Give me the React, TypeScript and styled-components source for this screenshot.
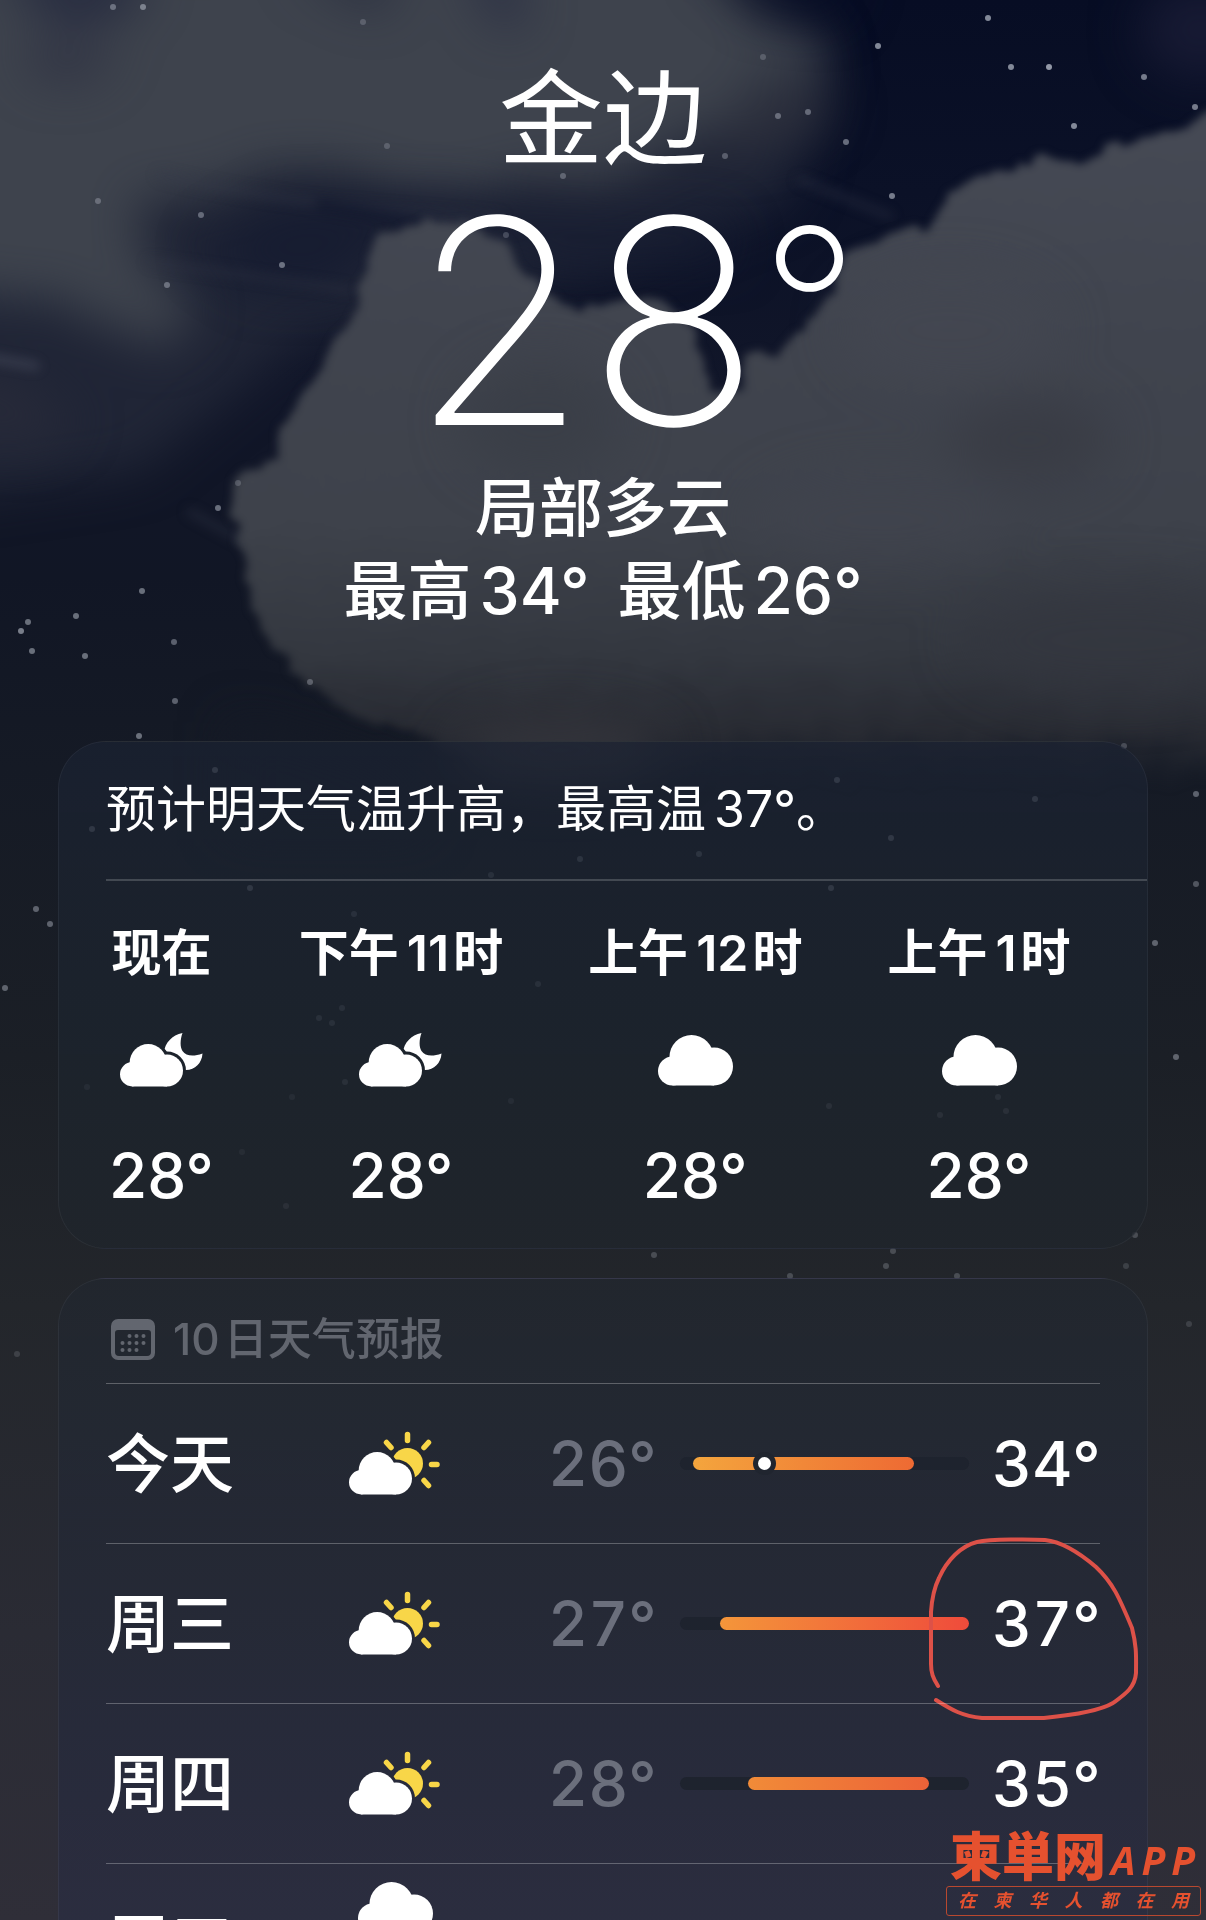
import React, { useId } from "react";
import styled, { createGlobalStyle } from "styled-components";

const GlobalStyle = createGlobalStyle`
  *, *::before, *::after { box-sizing: border-box; }
  body {
    margin: 0;
    background: #2d2d38;
    color: #fff;
    font-family: Inter, "Noto Sans CJK SC", sans-serif;
  }
  h1, h2, p, ul, ol { margin: 0; padding: 0; font-weight: inherit; }
  ul, ol { list-style: none; }
`;

const Page = styled.main`
  position: relative;
  height: 100vh;
  overflow: hidden;
  padding: 59px 58px 0;
`;

const SkyArt = styled.svg`
  position: absolute;
  inset: 0;
  z-index: -1;
  width: 100%;
  height: 100%;
`;

const Header = styled.header`
  display: flex;
  flex-direction: column;
  align-items: center;
  padding-bottom: 109px;
`;

const City = styled.h1`
  font-size: 104px;
  line-height: 121px;
  font-weight: 400;
`;

const CurrentTemp = styled.p`
  display: flex;
  align-items: flex-start;
  padding: 0 0 4px 64px;
  font-size: 286px;
  line-height: 282px;
  font-weight: 200;
`;

const Degree = styled.span`
  font-size: 218px;
  line-height: 252px;
  font-weight: 250;
`;

const Conditions = styled.p`
  display: flex;
  gap: 28px;
  font-size: 64px;
  line-height: 83px;
  font-weight: 500;
`;

const Num = styled.span`
  margin-left: 8px;
`;

const Cards = styled.div`
  display: flex;
  flex-direction: column;
  gap: 29px;
`;

const Card = styled.section<{ $tone: "hourly" | "daily" }>`
  border: 1px solid rgba(255, 255, 255, 0.05);
  border-radius: 48px;
  padding-left: 47px;
  background: ${(p) =>
    p.$tone === "hourly"
      ? "linear-gradient(rgba(27,34,50,.72), rgba(28,36,46,.76) 55%, rgba(32,37,44,.8))"
      : "linear-gradient(rgba(34,39,47,.8), rgba(36,41,54,.85) 40%, rgba(44,46,68,.85))"};
`;

const Summary = styled.p`
  padding: 37px 0 40px;
  border-bottom: 2px solid rgba(255, 255, 255, 0.18);
  font-size: 50px;
  line-height: 60px;
`;

const Hours = styled.ol`
  display: flex;
  gap: 85px;
  padding: 42px 47px 36px 3px;
`;

const Hour = styled.li`
  display: flex;
  flex-direction: column;
  align-items: center;
`;

const HourLabel = styled.span`
  font-size: 50px;
  line-height: 60px;
  font-weight: 600;
  white-space: nowrap;
`;

const HourDigits = styled.span`
  margin: 0 4px 0 8px;
`;

const HourIcon = styled.span`
  display: flex;
  align-items: center;
  height: 54px;
  margin: 50px 0 53px;
`;

const HourTemp = styled.span`
  font-size: 62px;
  line-height: 72px;
  font-weight: 500;
`;

const DailyBody = styled.div`
  padding: 29px 47px 0 0;
`;

const DailyTitle = styled.h2`
  display: flex;
  align-items: center;
  gap: 18px;
  padding: 0 5px 13px;
  color: #62666f;
  font-size: 44px;
  line-height: 62px;
  font-weight: 500;
`;

const TitleCount = styled.span`
  margin-right: 4px;
`;

const DayRow = styled.li`
  position: relative;
  display: flex;
  align-items: center;
  height: 160px;
  border-top: 1px solid rgba(255, 255, 255, 0.27);
  font-size: 62px;
  line-height: 80px;
  font-weight: 500;
`;

const DayName = styled.span`
  width: 243px;
  font-size: 64px;
`;

const DayIcon = styled.span`
  display: flex;
  justify-content: center;
  width: 92px;
  margin-right: 107px;
`;

const Low = styled.span`
  width: 105px;
  color: #6b6f7c;
  font-variant-numeric: tabular-nums;
`;

const High = styled.span`
  width: 108px;
  font-variant-numeric: tabular-nums;
`;

const Track = styled.div`
  flex: 1;
  position: relative;
  height: 13px;
  margin: 0 23px 0 27px;
  border-radius: 7px;
  background: #1e232e;
`;

const Fill = styled.div`
  position: absolute;
  top: 0;
  bottom: 0;
  border-radius: 7px;
`;

const NowDot = styled.div`
  position: absolute;
  top: 0;
  width: 13px;
  height: 13px;
  margin-left: -6px;
  border-radius: 50%;
  background: #fff;
  box-shadow: 0 0 0 5px #20252f;
`;

const Scribble = styled.svg`
  position: absolute;
  right: -40px;
  top: -8px;
  width: 212px;
  height: 188px;
  overflow: visible;
`;

const Watermark = styled.aside`
  position: absolute;
  right: 5px;
  bottom: 4px;
  width: 255px;
  color: #e5512f;
`;

const Brand = styled.div`
  display: flex;
  align-items: center;
  justify-content: space-between;
  padding: 0 6px 0 4px;
`;

const BrandName = styled.span`
  font-size: 52px;
  line-height: 56px;
  font-weight: 900;
`;

const BrandApp = styled.span`
  display: flex;
  gap: 6px;
  padding-top: 4px;
  font-family: "Open Sans", sans-serif;
  font-size: 39px;
  line-height: 52px;
  font-weight: 700;
  font-style: italic;
`;

const Slogan = styled.div`
  display: flex;
  justify-content: space-between;
  border: 1px solid #b8482f;
  border-radius: 3px;
  padding: 0 11px;
  font-size: 18px;
  line-height: 28px;
  font-weight: 600;
  font-style: italic;
`;

/* ---------- icons ---------- */

const CloudShape = () => (
  <>
    <circle cx="14.500" cy="36" r="14.500" />
    <circle cx="33.500" cy="22" r="22" />
    <circle cx="56" cy="31.500" r="19" />
    <path d="M14.500 25H56V50.500H14.500Z" />
  </>
);

const CloudIcon = () => (
  <svg width="75" height="51" viewBox="0 0 75 51" fill="#fff" aria-label="多云">
    <CloudShape />
  </svg>
);

const CloudRainIcon = () => (
  <svg width="75" height="124" viewBox="0 0 75 124" fill="#fff" aria-label="雨">
    <CloudShape />
    <g stroke="#6fc5f5" strokeWidth="5" strokeLinecap="round">
      <path d="M22 60l-5 9M38 60l-5 9M54 60l-5 9" />
    </g>
  </svg>
);

const CloudMoonIcon = () => {
  const id = useId();
  const place = "translate(0 11) scale(.84)";
  return (
    <svg width="83" height="54" viewBox="0 0 83 54" fill="#fff" aria-label="夜间局部多云">
      <mask id={id} maskUnits="userSpaceOnUse" x="0" y="0" width="83" height="54">
        <rect width="83" height="54" fill="#fff" />
        <g transform={place} fill="#000" stroke="#000" strokeWidth="7">
          <CloudShape />
        </g>
      </mask>
      <g mask={`url(#${id})`}>
        <path d="M62.5 0C52 2 45 10 44 19C45 31 56 37 66 37C75 37 82 30 82.500 20.500C73 24 66 23 62.500 18C60 14 60 7 62.500 0Z" />
      </g>
      <g transform={place}>
        <CloudShape />
      </g>
    </svg>
  );
};

const CloudSunIcon = () => {
  const id = useId();
  const place = "translate(0 21) scale(.84)";
  return (
    <svg width="92" height="65" viewBox="0 0 92 65" fill="#fff" aria-label="局部多云">
      <mask id={id} maskUnits="userSpaceOnUse" x="0" y="0" width="92" height="65">
        <rect width="92" height="65" fill="#fff" />
        <g transform={place} fill="#000" stroke="#000" strokeWidth="7">
          <CloudShape />
        </g>
      </mask>
      <circle cx="58.500" cy="32.500" r="15.500" fill="#f8d648" mask={`url(#${id})`} />
      <path
        d="M58.500 3.500V9.500M79.500 11.500L75 16.500M37.500 11.500L42 16.500M82.500 33.500H88M75 49.500L79.500 54.500"
        stroke="#f8d648"
        strokeWidth="5.500"
        strokeLinecap="round"
      />
      <g transform={place}>
        <CloudShape />
      </g>
    </svg>
  );
};

const CalendarIcon = () => {
  const dots: [number, number][] = [
    [18.5, 17], [25.5, 17], [32.5, 17],
    [11.5, 24], [18.5, 24], [25.5, 24], [32.5, 24],
    [11.5, 31], [18.5, 31], [25.5, 31],
  ];
  return (
    <svg width="44" height="41" viewBox="0 0 44 41" fill="currentColor" aria-hidden="true">
      <path
        fillRule="evenodd"
        d="M7 0H37A7 7 0 0 1 44 7V34A7 7 0 0 1 37 41H7A7 7 0 0 1 0 34V7A7 7 0 0 1 7 0ZM7 11A3 3 0 0 0 4 14V33A4 4 0 0 0 8 37H36A4 4 0 0 0 40 33V14A3 3 0 0 0 37 11Z"
      />
      {dots.map(([x, y]) => (
        <circle key={`${x}-${y}`} cx={x} cy={y} r="2" />
      ))}
    </svg>
  );
};

/* ---------- night sky ---------- */

const STARS: [number, number, number][] = [
  [113, 7, 0.5], [143, 7, 0.6], [363, 22, 0.3], [988, 18, 0.8], [878, 46, 0.8], [1011, 67, 0.8],
  [1049, 67, 0.9], [1144, 77, 0.7], [1195, 107, 0.7], [1074, 126, 0.8], [778, 116, 0.5],
  [808, 112, 0.5], [846, 142, 0.6], [763, 57, 0.3], [725, 156, 0.4], [892, 196, 0.7],
  [563, 176, 0.4], [387, 146, 0.3], [201, 215, 0.5], [98, 201, 0.4], [282, 265, 0.6],
  [167, 285, 0.5], [506, 235, 0.3], [218, 508, 0.6], [142, 591, 0.6], [76, 616, 0.6],
  [28, 622, 0.6], [21, 631, 0.7], [32, 651, 0.6], [85, 656, 0.6], [174, 642, 0.5],
  [310, 682, 0.4], [175, 701, 0.5], [139, 736, 0.6], [238, 483, 0.3], [215, 770, 0.6],
  [92, 829, 0.6], [250, 888, 0.6], [491, 875, 0.4], [580, 859, 0.5], [354, 914, 0.4],
  [342, 1008, 0.4], [319, 1018, 0.4], [332, 1023, 0.4], [538, 984, 0.4], [345, 1082, 0.4],
  [292, 1097, 0.3], [286, 1206, 0.4], [242, 1152, 0.3], [50, 924, 0.5], [87, 1087, 0.3],
  [511, 1101, 0.3], [837, 780, 0.6], [1035, 799, 0.6], [891, 838, 0.6], [699, 854, 0.5],
  [831, 888, 0.6], [1196, 794, 0.5], [1196, 884, 0.4], [1155, 943, 0.5], [1176, 1057, 0.5],
  [998, 1097, 0.4], [940, 1115, 0.4], [1006, 1111, 0.4], [829, 1106, 0.4], [1135, 1235, 0.3],
  [893, 1251, 0.3], [654, 1255, 0.3], [1124, 746, 0.3], [886, 1266, 0.3], [790, 1276, 0.3],
  [957, 1276, 0.3], [1126, 1266, 0.2], [1189, 1324, 0.2], [5, 988, 0.5], [36, 909, 0.5], [17, 1354, 0.2],
];

const Sky = () => (
  <SkyArt viewBox="0 0 1206 1920" preserveAspectRatio="xMidYMin slice" aria-hidden="true">
    <defs>
      <linearGradient id="night" x1="0" y1="0" x2="0" y2="1">
        <stop offset="0" stopColor="#070d24" />
        <stop offset=".1" stopColor="#0b1127" />
        <stop offset=".2" stopColor="#111629" />
        <stop offset=".3" stopColor="#111625" />
        <stop offset=".4" stopColor="#151a25" />
        <stop offset=".55" stopColor="#1b1f26" />
        <stop offset=".68" stopColor="#23262b" />
        <stop offset=".85" stopColor="#2a2b34" />
        <stop offset="1" stopColor="#2f2e38" />
      </linearGradient>
      <linearGradient id="cumulus" x1="0" y1="100" x2="0" y2="800" gradientUnits="userSpaceOnUse">
        <stop offset="0" stopColor="#464a55" />
        <stop offset=".35" stopColor="#40444e" />
        <stop offset=".6" stopColor="#3e424b" />
        <stop offset=".8" stopColor="#33373f" />
        <stop offset=".9" stopColor="#2c2e35" stopOpacity=".85" />
        <stop offset=".98" stopColor="#262a33" stopOpacity="0" />
      </linearGradient>
      <filter id="ragged" x="-10%" y="-10%" width="120%" height="120%" colorInterpolationFilters="sRGB">
        <feTurbulence type="fractalNoise" baseFrequency=".03" numOctaves="4" seed="7" />
        <feDisplacementMap in="SourceGraphic" scale="26" xChannelSelector="R" yChannelSelector="G" />
        <feGaussianBlur stdDeviation="4" />
      </filter>
      <filter id="haze" x="-30%" y="-30%" width="160%" height="160%" colorInterpolationFilters="sRGB">
        <feTurbulence type="fractalNoise" baseFrequency=".008 .016" numOctaves="4" seed="3" />
        <feDisplacementMap in="SourceGraphic" scale="50" xChannelSelector="R" yChannelSelector="G" />
        <feGaussianBlur stdDeviation="24" />
      </filter>
      <filter id="soft" x="-50%" y="-50%" width="200%" height="200%" colorInterpolationFilters="sRGB">
        <feGaussianBlur stdDeviation="24" />
      </filter>
      <filter id="wisp" x="-50%" y="-50%" width="200%" height="200%" colorInterpolationFilters="sRGB">
        <feGaussianBlur stdDeviation="6" />
      </filter>
    </defs>
    <rect width="1206" height="1920" fill="url(#night)" />
    <g filter="url(#soft)">
      <path d="M-60 -60H760L830 60L790 200L640 260L300 340L140 470L-60 500Z" fill="#242939" opacity=".8" />
    </g>
    <g filter="url(#haze)">
      <path d="M-60 -60H700L760 10L825 35L815 75L740 95L690 140L600 180L460 190L340 175L230 180L140 205L150 260L200 300L160 345L80 320L-60 270Z" fill="#3e434d" />
      <path d="M720 100L800 95L835 125L800 150L720 160Z" fill="#2d303d" />
      <path d="M-60 370L40 375L90 420L40 450L-60 440Z" fill="#272a39" />
    </g>
    <g filter="url(#soft)">
      <path d="M-10 -30H150L130 10L60 20Z" fill="#1c203a" opacity=".8" />
      <path d="M20 40H120L90 80H40Z" fill="#2b2e40" opacity=".7" />
      <path d="M290 -30H400L380 12Z" fill="#1f2438" opacity=".7" />
      <path d="M460 -40L520 -30L525 25L500 30Z" fill="#232840" opacity=".7" />
      <path d="M700 -40L860 -40L840 20L760 10Z" fill="#080e26" opacity=".8" />
      <path d="M280 200L440 200L560 218L720 222L740 260L560 260L480 232L370 250L340 290L260 290L200 250Z" fill="#151b30" opacity=".85" />
      <ellipse cx="1200" cy="30" rx="60" ry="50" fill="#171a33" />
    </g>
    <g filter="url(#wisp)" fill="none" strokeLinecap="round" opacity=".35">
      <path d="M160 175Q280 205 500 218" stroke="#353a4a" strokeWidth="9" />
      <path d="M150 262Q240 275 350 290" stroke="#343847" strokeWidth="8" />
      <path d="M320 205L420 222" stroke="#0a1028" strokeWidth="10" />
      <path d="M-10 358L36 366" stroke="#6a6e80" strokeWidth="8" />
      <path d="M800 180L890 216" stroke="#3a3f50" strokeWidth="8" />
      <path d="M190 512L250 545" stroke="#3a3f50" strokeWidth="8" />
    </g>
    <g filter="url(#ragged)">
      <path
        d="M1260 100L1206 117L1173 127L1143 144L1106 149L1078 164L1068 160L1016 164L956 190L930 228L904 228L878 234L844 254L833 295L803 329L777 351L747 357L743 385L713 390L704 374L695 329L657 297L608 302L580 310L551 300L526 276L500 240L460 218L405 228L385 238L368 255L370 270L352 290L358 315L340 335L325 365L305 390L280 425L277 465L250 463L235 480L231 510L245 560L258 625L305 690L380 722L450 745L500 790L560 830L1260 830Z"
        fill="url(#cumulus)"
      />
    </g>
    <g filter="url(#soft)">
      <ellipse cx="1030" cy="440" rx="80" ry="44" fill="#383b43" opacity=".8" />
      <ellipse cx="950" cy="330" rx="110" ry="60" fill="#444852" opacity=".6" />
      <ellipse cx="540" cy="420" rx="80" ry="60" fill="#393d46" opacity=".7" />
      <ellipse cx="880" cy="520" rx="130" ry="50" fill="#41454e" opacity=".6" />
      <ellipse cx="1120" cy="640" rx="160" ry="60" fill="#33363e" opacity=".7" />
      <path d="M230 720L400 770L430 830H230Z" fill="#151a26" />
      <ellipse cx="560" cy="750" rx="110" ry="36" fill="#33343b" />
    </g>
    {STARS.map(([x, y, o]) => (
      <circle key={`${x}-${y}`} cx={x} cy={y} r="3" fill="#c9ced9" opacity={o * 0.8} />
    ))}
  </SkyArt>
);

/* ---------- data ---------- */

const HOURS = [
  { before: "现在", digits: "", after: "", temp: 28, night: true },
  { before: "下午", digits: "11", after: "时", temp: 28, night: true },
  { before: "上午", digits: "12", after: "时", temp: 28, night: false },
  { before: "上午", digits: "1", after: "时", temp: 28, night: false },
];

type Range = {
  low: number; high: number; from: number; to: number;
  colors: [string, string]; now?: number;
};

type Day = { name: string; rain?: boolean; circled?: boolean; range?: Range };

const DAYS: Day[] = [
  { name: "今天", range: { low: 26, high: 34, from: 4.5, to: 81, colors: ["#f4a53d", "#ee6a33"], now: 29.2 } },
  { name: "周三", circled: true, range: { low: 27, high: 37, from: 14, to: 100, colors: ["#f4963a", "#ef4b3b"] } },
  { name: "周四", range: { low: 28, high: 35, from: 23.5, to: 86, colors: ["#f18b38", "#ec6238"] } },
  { name: "周五", rain: true },
];

const HandCircle = () => (
  <Scribble viewBox="0 0 212 188" aria-hidden="true">
    <path
      d="M10 150C5 142 3 137 3 128V76C4 61 6 52 11 42C19 24 33 10 49 6C63 3 102 3 117 4C136 6 154 19 168 31C185 47 191 61 204 92C209 112 208 121 208 137C207 152 196 159 185 167C170 176 136 180 116 182H54C34 180 24 174 8 164"
      fill="none"
      stroke="#dd5148"
      strokeWidth="4"
      strokeLinecap="round"
    />
  </Scribble>
);

const RangeBar = ({ low, high, from, to, colors, now }: Range) => (
  <>
    <Low>{low}°</Low>
    <Track>
      <Fill
        style={{
          left: `${from}%`,
          right: `${100 - to}%`,
          background: `linear-gradient(90deg, ${colors[0]}, ${colors[1]})`,
        }}
      />
      {now !== undefined && <NowDot style={{ left: `${now}%` }} />}
    </Track>
    <High>{high}°</High>
  </>
);

const spread = (text: string) => [...text].map((c, i) => <span key={i}>{c}</span>);

export default function App() {
  return (
    <Page>
      <GlobalStyle />
      <Sky />
      <Header>
        <City>金边</City>
        <CurrentTemp>28<Degree>°</Degree></CurrentTemp>
        <Conditions>局部多云</Conditions>
        <Conditions>
          <span>最高<Num>34°</Num></span>
          <span>最低<Num>26°</Num></span>
        </Conditions>
      </Header>
      <Cards>
        <Card $tone="hourly">
          <Summary>预计明天气温升高，最高温<Num>37°</Num>。</Summary>
          <Hours>
            {HOURS.map((h) => (
              <Hour key={h.before + h.digits}>
                <HourLabel>
                  {h.before}
                  {h.digits && <HourDigits>{h.digits}</HourDigits>}
                  {h.after}
                </HourLabel>
                <HourIcon>{h.night ? <CloudMoonIcon /> : <CloudIcon />}</HourIcon>
                <HourTemp>{h.temp}°</HourTemp>
              </Hour>
            ))}
          </Hours>
        </Card>
        <Card $tone="daily">
          <DailyBody>
            <DailyTitle>
              <CalendarIcon />
              <span><TitleCount>10</TitleCount>日天气预报</span>
            </DailyTitle>
            <ul>
              {DAYS.map((d) => (
                <DayRow key={d.name}>
                  <DayName>{d.name}</DayName>
                  <DayIcon>{d.rain ? <CloudRainIcon /> : <CloudSunIcon />}</DayIcon>
                  {d.range && <RangeBar {...d.range} />}
                  {d.circled && <HandCircle />}
                </DayRow>
              ))}
            </ul>
          </DailyBody>
        </Card>
      </Cards>
      <Watermark>
        <Brand>
          <BrandName>柬単网</BrandName>
          <BrandApp>{spread("APP")}</BrandApp>
        </Brand>
        <Slogan>{spread("在柬华人都在用")}</Slogan>
      </Watermark>
    </Page>
  );
}
